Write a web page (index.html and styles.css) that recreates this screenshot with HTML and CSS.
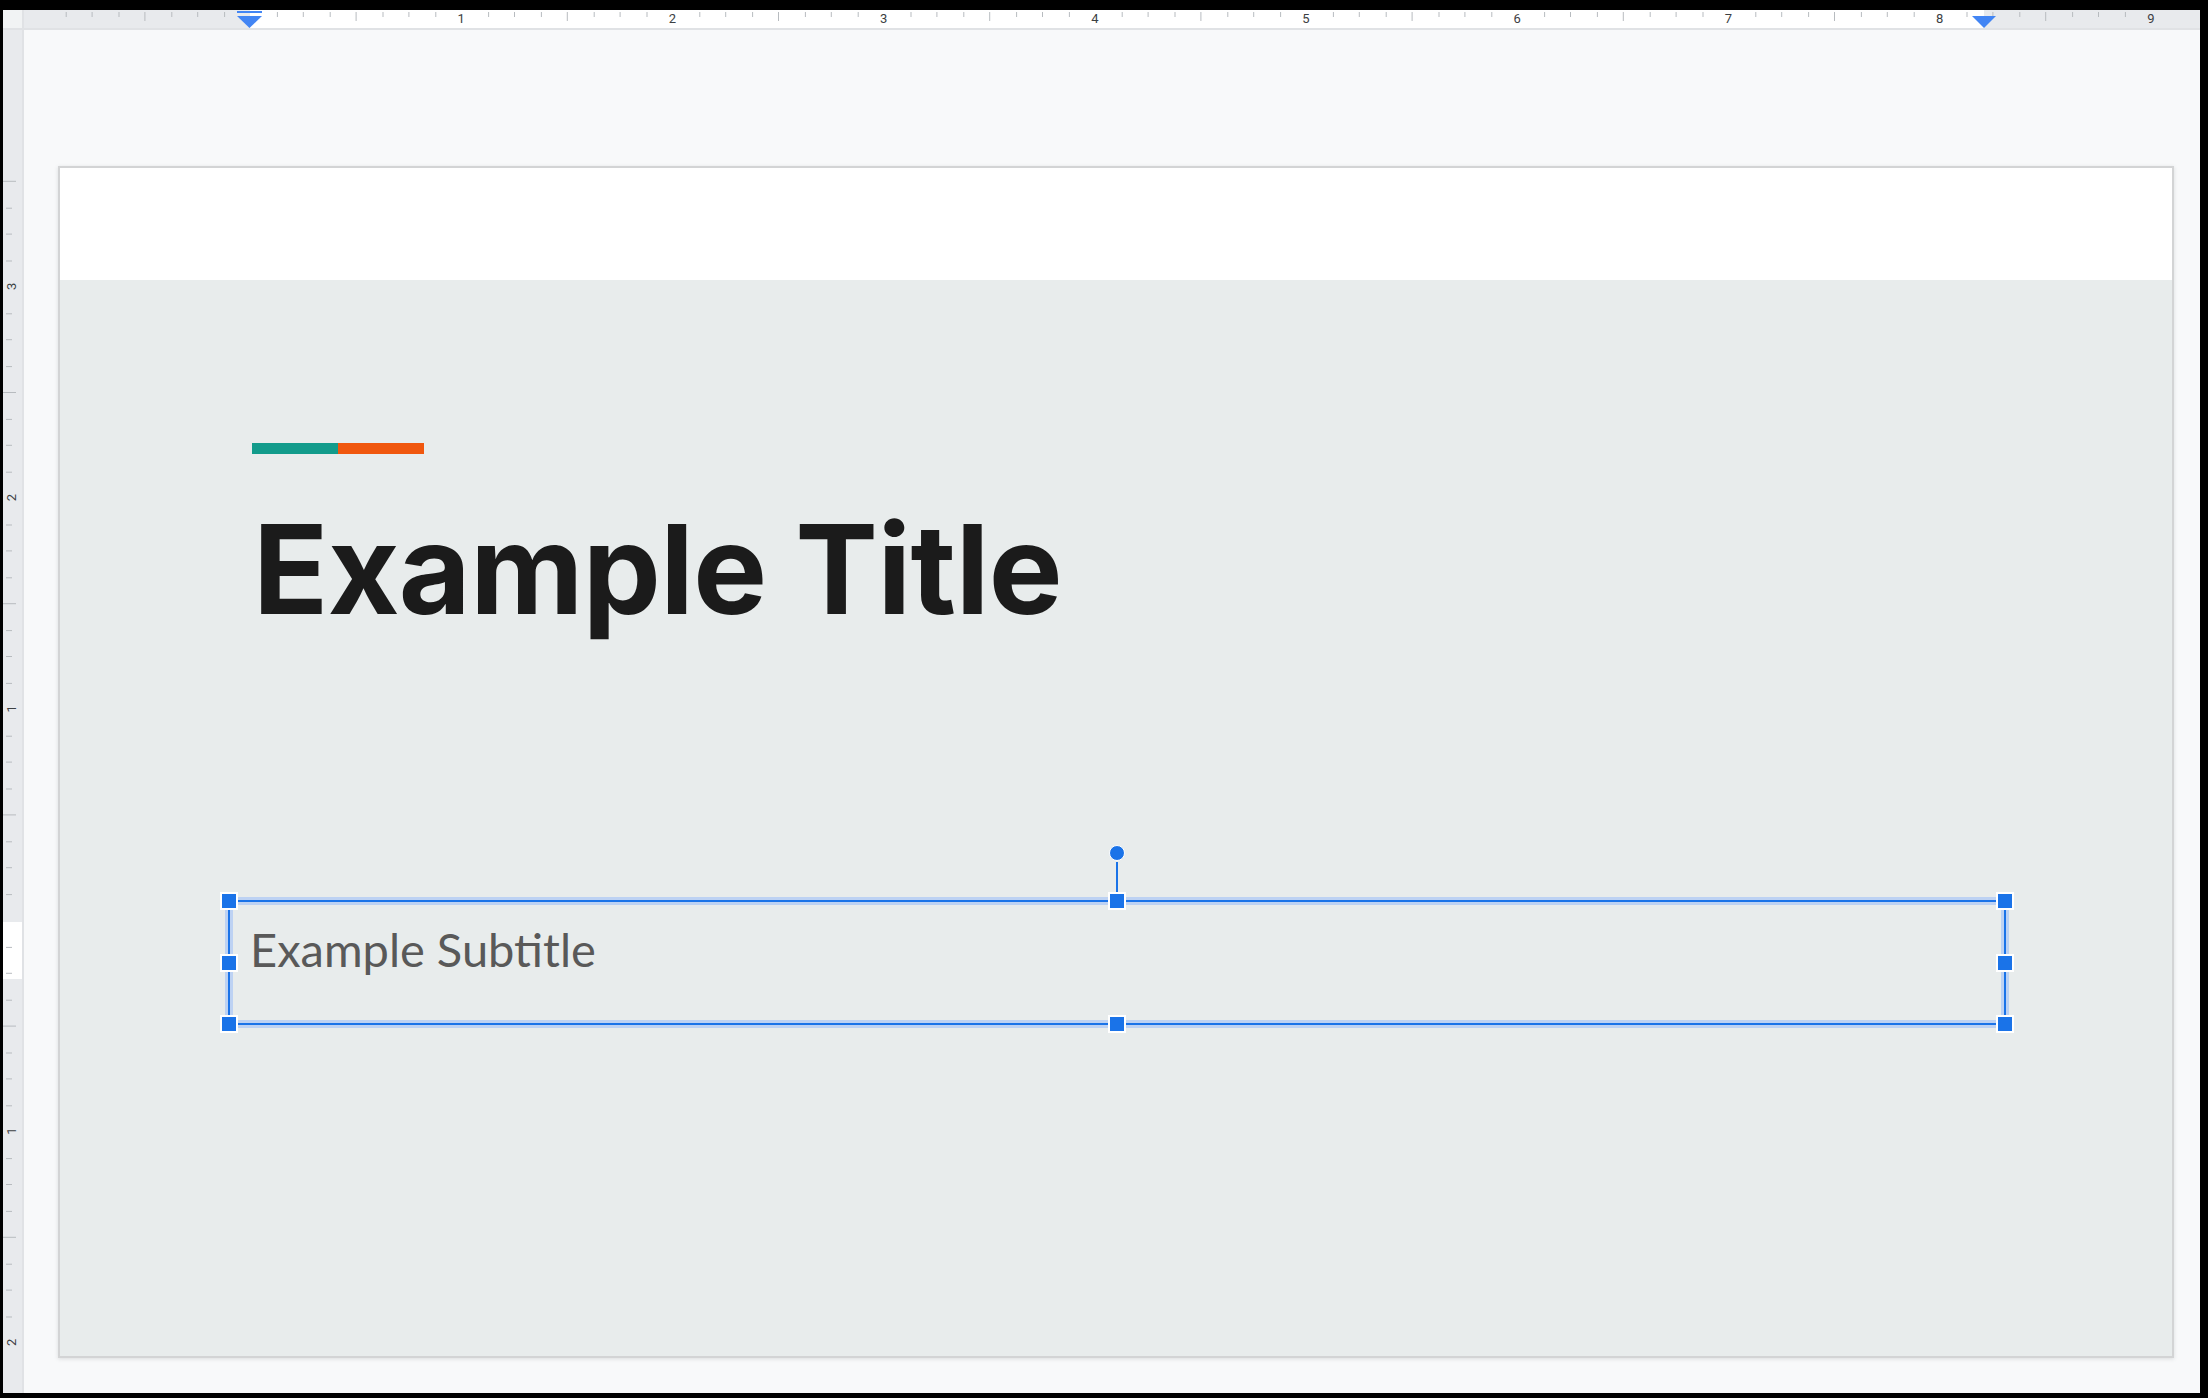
FILE: index.html
```html
<!DOCTYPE html>
<html lang="en">
<head>
<meta charset="utf-8">
<title>Slide editor</title>
<link rel="stylesheet" href="styles.css">
</head>
<body>
<div class="window">
  <div class="corner"></div>
  <div class="ruler-h">
    <svg class="ruler-svg" width="2176" height="18" viewBox="0 0 2176 18">
      <defs>
        <pattern id="ticksH" patternUnits="userSpaceOnUse" x="226" y="0" width="211.2" height="18">
          <g fill="#b7bbbf" shape-rendering="crispEdges">
            <rect x="26.4" y="2" width="1" height="5"/>
            <rect x="52.8" y="2" width="1" height="5"/>
            <rect x="79.2" y="2" width="1" height="5"/>
            <rect x="105.6" y="2" width="1" height="9"/>
            <rect x="132" y="2" width="1" height="5"/>
            <rect x="158.4" y="2" width="1" height="5"/>
            <rect x="184.8" y="2" width="1" height="5"/>
          </g>
        </pattern>
      </defs>
      <rect x="0" y="0" width="226" height="18" fill="#e8eaed"/>
      <rect x="226" y="0" width="1734" height="18" fill="#ffffff"/>
      <rect x="1960" y="0" width="216" height="18" fill="#e8eaed"/>
      <rect x="36" y="0" width="2112" height="18" fill="url(#ticksH)"/>
      <g class="ruler-num" text-anchor="middle">
        <text x="437.2" y="12.5">1</text>
        <text x="648.4" y="12.5">2</text>
        <text x="859.6" y="12.5">3</text>
        <text x="1070.8" y="12.5">4</text>
        <text x="1282" y="12.5">5</text>
        <text x="1493.2" y="12.5">6</text>
        <text x="1704.4" y="12.5">7</text>
        <text x="1915.6" y="12.5">8</text>
        <text x="2126.8" y="12.5">9</text>
      </g>
      <g fill="#4285f4">
        <rect x="213" y="1" width="25" height="2"/>
        <polygon points="213,6 238,6 225.5,18"/>
        <polygon points="1948,6 1972,6 1960,18"/>
      </g>
    </svg>
  </div>
  <div class="ruler-v">
    <svg class="ruler-svg" width="19" height="1363" viewBox="0 0 19 1363">
      <defs>
        <pattern id="ticksV" patternUnits="userSpaceOnUse" x="0" y="890" width="19" height="211.2">
          <g fill="#b7bbbf" shape-rendering="crispEdges">
            <rect x="3" y="26.4" width="6" height="1"/>
            <rect x="3" y="52.8" width="6" height="1"/>
            <rect x="3" y="79.2" width="6" height="1"/>
            <rect x="0" y="105.6" width="13" height="1"/>
            <rect x="3" y="132" width="6" height="1"/>
            <rect x="3" y="158.4" width="6" height="1"/>
            <rect x="3" y="184.8" width="6" height="1"/>
          </g>
        </pattern>
      </defs>
      <rect x="0" y="0" width="19" height="1363" fill="#e8eaed"/>
      <rect x="0" y="892" width="19" height="57" fill="#ffffff"/>
      <rect x="0" y="138" width="19" height="1188" fill="url(#ticksV)"/>
      <g class="ruler-num" text-anchor="middle">
        <text transform="translate(12.5 256.4) rotate(-90)">3</text>
        <text transform="translate(12.5 467.6) rotate(-90)">2</text>
        <text transform="translate(12.5 678.8) rotate(-90)">1</text>
        <text transform="translate(12.5 1101.2) rotate(-90)">1</text>
        <text transform="translate(12.5 1312.4) rotate(-90)">2</text>
      </g>
    </svg>
  </div>
  <main class="canvas">
    <section class="slide">
      <div class="slide-header"></div>
      <div class="slide-body">
        <div class="accent"><span class="accent-teal"></span><span class="accent-orange"></span></div>
        <h1 class="title">Example Title</h1>
        <div class="textbox">
          <p class="subtitle">Example Subtitle</p>
          <div class="selection">
            <span class="rotate-stem"></span>
            <span class="rotate-knob"></span>
            <span class="handle h-left h-top"></span>
            <span class="handle h-center h-top"></span>
            <span class="handle h-right h-top"></span>
            <span class="handle h-left h-middle"></span>
            <span class="handle h-right h-middle"></span>
            <span class="handle h-left h-bottom"></span>
            <span class="handle h-center h-bottom"></span>
            <span class="handle h-right h-bottom"></span>
          </div>
        </div>
      </div>
    </section>
  </main>
</div>
</body>
</html>
```
FILE: styles.css
```css
html, body {
  margin: 0;
}

body {
  width: 2208px;
  height: 1398px;
  box-sizing: border-box;
  padding: 10px 8px 5px 3px;
  background: #000;
  overflow: hidden;
  font-family: Roboto, "Liberation Sans", sans-serif;
}

.window {
  height: 100%;
  display: grid;
  grid-template-columns: 21px 1fr;
  grid-template-rows: 20px 1fr;
  background: #f8f9fa;
}

.corner {
  background: #f1f3f4;
  border-right: 2px solid #e0e2e5;
  border-bottom: 2px solid #e0e2e5;
}

.ruler-h {
  height: 18px;
  border-bottom: 2px solid #e0e2e5;
  overflow: hidden;
}

.ruler-v {
  width: 19px;
  border-right: 2px solid #e0e2e5;
  overflow: hidden;
}

.ruler-svg {
  display: block;
}

.ruler-num {
  font-family: Roboto, "Liberation Sans", sans-serif;
  font-size: 13px;
  fill: #3c4043;
}

.canvas {
  min-width: 0;
  min-height: 0;
  overflow: hidden;
  padding: 136px 0 0 34px;
}

.slide {
  width: 2112px;
  height: 1188px;
  border: 2px solid #d3d4d5;
  box-shadow: 0 1px 4px rgba(60, 64, 67, 0.15);
  display: flex;
  flex-direction: column;
}

.slide-header {
  flex: none;
  height: 112px;
  background: #ffffff;
}

.slide-body {
  flex: 1;
  background: #e8ecec;
  padding-left: 168px;
  display: flex;
  flex-direction: column;
  align-items: flex-start;
}

.accent {
  display: flex;
  height: 11px;
  margin: 163px 0 0 24px;
}

.accent-teal {
  width: 86px;
  background: #129b8b;
}

.accent-orange {
  width: 86px;
  background: #f0570e;
}

.title {
  margin: 53px 0 0 25px;
  font-family: Inter, "Noto Sans", sans-serif;
  font-weight: 700;
  font-size: 124px;
  line-height: 124px;
  letter-spacing: -0.6px;
  color: #1b1b1b;
  white-space: nowrap;
}

.textbox {
  position: relative;
  margin-top: 269px;
  width: 1778px;
  height: 125px;
  box-sizing: border-box;
  padding: 21px 20px 0 22px;
}

.subtitle {
  margin: 0;
  font-family: Lato, "Noto Sans", sans-serif;
  font-weight: 400;
  font-size: 47px;
  line-height: 1.2;
  color: #595959;
  white-space: nowrap;
}

.selection {
  position: absolute;
  inset: 0;
  border: 2px solid #1a73e8;
  box-shadow: 0 0 0 3px #bdd2f3, inset 0 0 0 3px #bdd2f3;
  pointer-events: none;
}

.handle {
  position: absolute;
  width: 14px;
  height: 14px;
  background: #1a73e8;
  border: 2px solid #ffffff;
  transform: translate(-50%, -50%);
}

.h-left { left: -1px; }
.h-center { left: 50%; }
.h-right { left: calc(100% + 1px); }
.h-top { top: -1px; }
.h-middle { top: 50%; }
.h-bottom { top: calc(100% + 1px); }

.rotate-stem {
  position: absolute;
  left: 50%;
  top: -40px;
  width: 2px;
  height: 30px;
  background: #1a73e8;
  transform: translateX(-50%);
}

.rotate-knob {
  position: absolute;
  left: 50%;
  top: -49px;
  width: 14px;
  height: 14px;
  border-radius: 50%;
  background: #1a73e8;
  border: 1px solid #ffffff;
  transform: translate(-50%, -50%);
}
```
